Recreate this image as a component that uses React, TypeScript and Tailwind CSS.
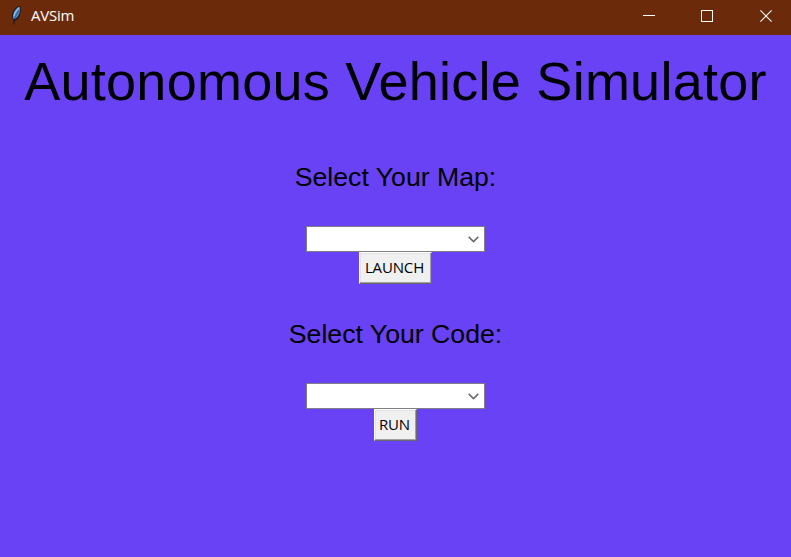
import React from "react";

function Feather() {
  return (
    <svg width="14" height="20" viewBox="0 0 14 20" className="block">
      <path d="M4.4 19.4 L4.8 15.5 C2.6 13.5 2.4 10 4.3 6.5 C6 3.2 8.6 1 11 0.7 C12.4 2.7 12 7.5 10.3 11 C9 13.6 7.6 15.2 5.8 15.6 L5.2 19.4 Z" fill="#0e1116" />
      <path d="M4.2 13.9 C3.2 11.4 4.3 7.6 6.4 4.8 C7.9 2.8 9.6 1.7 10.8 1.5 C11.7 4.4 10.9 8 9.5 10.6 C8.2 12.8 6.4 14.4 4.2 13.9 Z" fill="#4a82bf" />
      <path d="M5.1 11.5 C5.4 8.8 7.4 5.2 9.9 2.8" fill="none" stroke="#8dbbe8" strokeWidth="1.6" />
      <path d="M4.9 15.6 C5.9 11.8 7.8 8.2 9.9 5" fill="none" stroke="#244367" strokeWidth="0.6" />
    </svg>
  );
}

function TitleBar() {
  return (
    <header className="flex h-[35px] items-start justify-between bg-[#6b2b0b] text-white">
      <div className="flex items-start pl-[9px] pt-[5px]">
        <Feather />
        <span className="ml-2 font-['Open_Sans',sans-serif] text-[15px] leading-5 tracking-[-0.25px]">AVSim</span>
      </div>
      <div className="flex items-start pr-[19px] pt-[10px]">
        <svg width="12" height="12" shapeRendering="crispEdges"><path d="M0 5.5H12" stroke="white" /></svg>
        <svg width="12" height="12" className="ml-[46px]" shapeRendering="crispEdges"><rect x="0.5" y="0.5" width="11" height="11" fill="none" stroke="white" /></svg>
        <svg width="12" height="12" className="ml-[47px]"><path d="M0.4 0.4L11.6 11.6M11.6 0.4L0.4 11.6" stroke="white" strokeWidth="1.1" /></svg>
      </div>
    </header>
  );
}

function ComboBox() {
  return (
    <div className="flex h-[26px] w-[179px] items-center justify-end border border-[#7f7f85] bg-white pr-[5px] pt-px">
      <svg width="11" height="7" viewBox="0 0 11 7"><path d="M0.7 0.9L5.5 5.6L10.3 0.9" fill="none" stroke="#6a6a6a" strokeWidth="1.5" /></svg>
    </div>
  );
}

function PushButton({ label, size }: { label: string; size: string }) {
  return (
    <button className={`${size} flex h-8 items-center justify-center whitespace-nowrap border border-l-white border-t-white border-b-[#696969] border-r-[#696969] bg-[#f0f0f0] pb-0.5 pr-0.5 font-['Open_Sans',sans-serif] text-[15px] tracking-[-0.15px] text-black shadow-[inset_-1px_-1px_0_#a0a0a0,inset_1px_1px_0_#e3e3e3]`}>
      {label}
    </button>
  );
}

export default function App() {
  return (
    <div className="flex h-[557px] w-[791px] flex-col overflow-hidden bg-[#6942f5] font-['Liberation_Sans',Arial,sans-serif] text-black">
      <TitleBar />
      <main className="flex flex-col items-center">
        <h1 className="mt-[15px] whitespace-nowrap text-[54px] leading-[62px] tracking-[0.25px]">Autonomous Vehicle Simulator</h1>
        <h2 className="mt-[50px] whitespace-nowrap text-[26.67px] leading-[30px]">Select Your Map:</h2>
        <div className="mt-[34px] flex flex-col items-center">
          <ComboBox />
          <PushButton label="LAUNCH" size="w-[73px]" />
        </div>
        <h2 className="mt-[35px] whitespace-nowrap text-[26.67px] leading-[30px]">Select Your Code:</h2>
        <div className="mt-[34px] flex flex-col items-center">
          <ComboBox />
          <PushButton label="RUN" size="w-[43px]" />
        </div>
      </main>
    </div>
  );
}
